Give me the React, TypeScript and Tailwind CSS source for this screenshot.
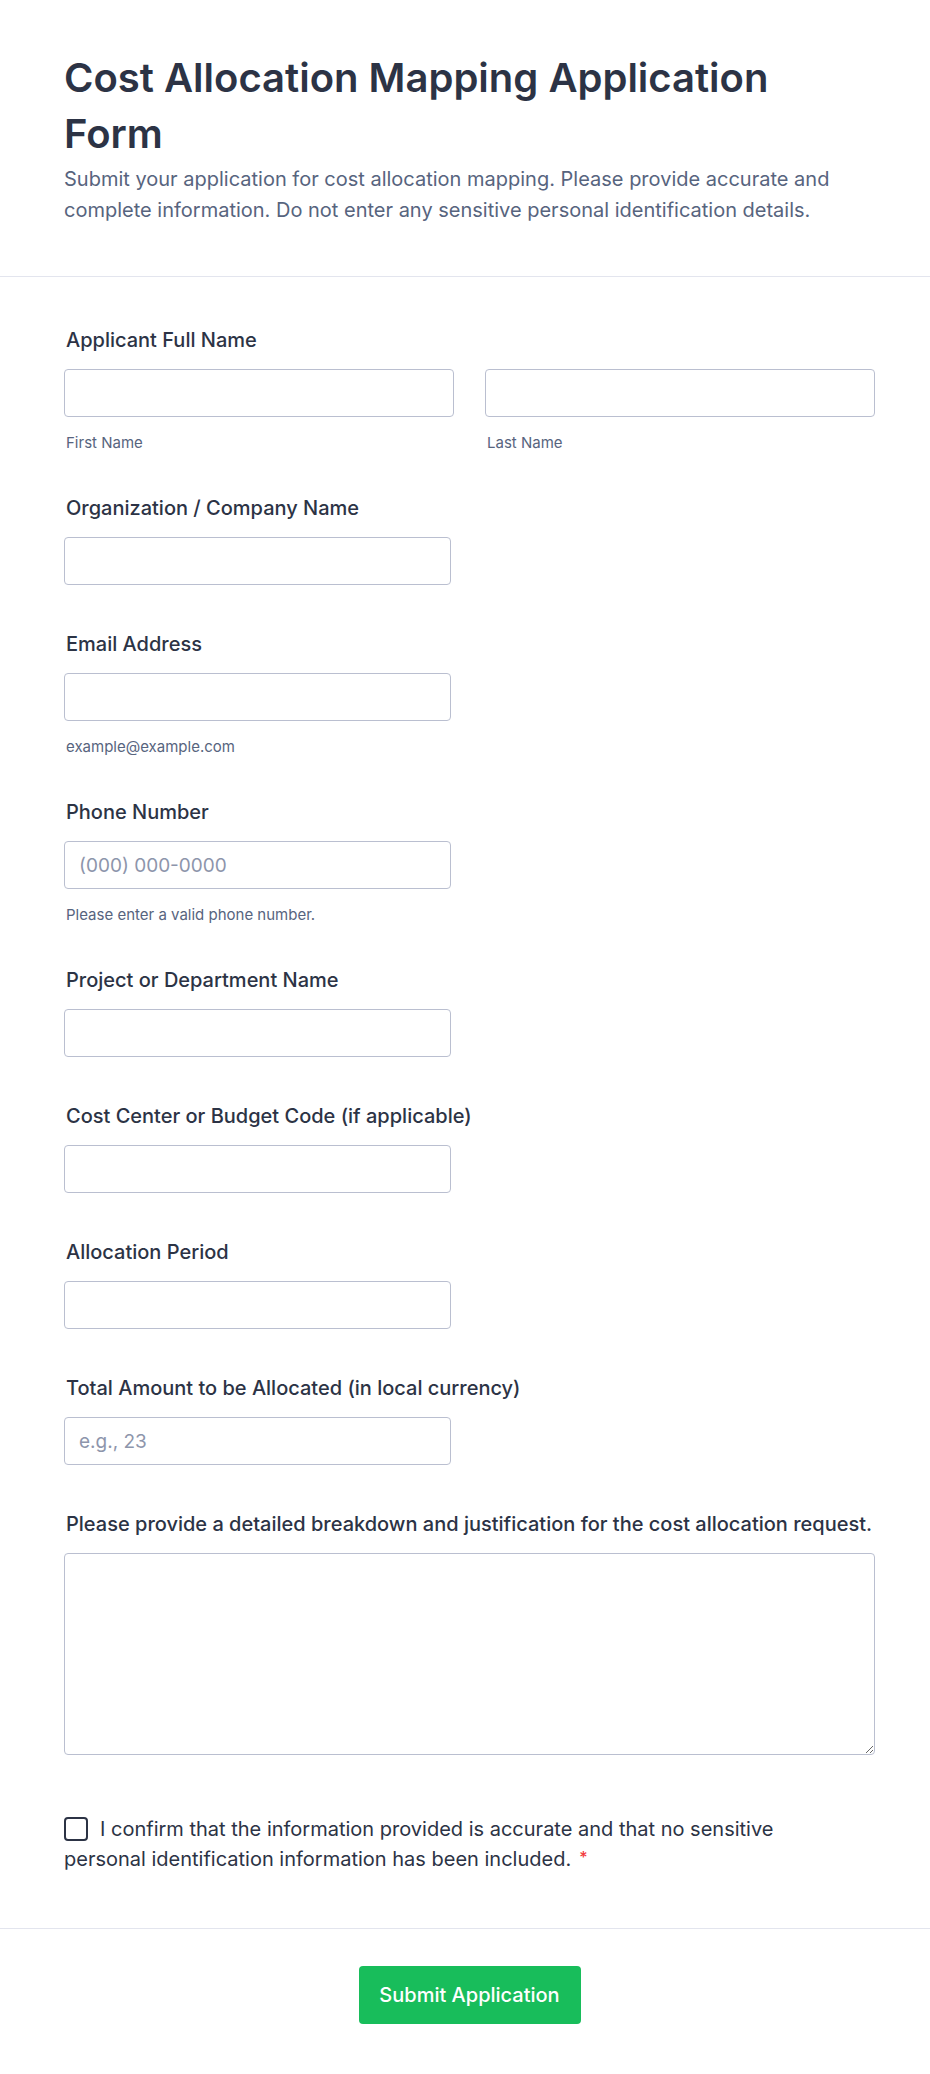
import React from 'react'

type Field = {
    label: string
    placeholder?: string
    sub?: string
}

const singleFields: Field[] = [
    { label: 'Organization / Company Name' },
    { label: 'Email Address', sub: 'example@example.com' },
    {
        label: 'Phone Number',
        placeholder: '(000) 000-0000',
        sub: 'Please enter a valid phone number.',
    },
    { label: 'Project or Department Name' },
    { label: 'Cost Center or Budget Code (if applicable)' },
    { label: 'Allocation Period' },
    { label: 'Total Amount to be Allocated (in local currency)', placeholder: 'e.g., 23' },
]

const inputClass =
    'block h-12 w-full rounded border border-[#babfd0] bg-white px-3.5 text-[19px] text-[#2c3345] placeholder:text-[#8d95ab] outline-none'

function Label({ children }: { children: React.ReactNode }) {
    return (
        <label className="mb-[15px] ml-0.5 block text-[20px] font-medium leading-[28px] text-[#2c3345]">
            {children}
        </label>
    )
}

function Sub({ children }: { children: React.ReactNode }) {
    return (
        <div className="ml-0.5 mt-4 -mb-1 text-[15px] leading-5 text-[#57647e]">
            {children}
        </div>
    )
}

export default function App() {
    return (
        <div className="min-h-screen bg-white font-['Inter',sans-serif] text-[#2c3345]">
            <div className="border-b border-[#e3e5ee] pl-16 pt-[50px] pb-[50px]">
                <div className="max-w-[800px]">
                    <h1 className="text-[40px] font-semibold leading-[56px] text-[#2c3345]">
                        Cost Allocation Mapping Application Form
                    </h1>
                    <p className="mt-0.5 text-[20px] leading-[31px] text-[#57647e]">
                        Submit your application for cost allocation mapping. Please
                        provide accurate and complete information. Do not enter any
                        sensitive personal identification details.
                    </p>
                </div>
            </div>

            <form className="pl-16 pr-[55px] pt-[49px]">
                <div className="pb-[45px]">
                    <Label>Applicant Full Name</Label>
                    <div className="grid grid-cols-2 gap-[31px]">
                        <div>
                            <input className={inputClass} />
                            <Sub>First Name</Sub>
                        </div>
                        <div>
                            <input className={inputClass} />
                            <Sub>Last Name</Sub>
                        </div>
                    </div>
                </div>

                {singleFields.map((f) => (
                    <div key={f.label} className="pb-[45px]">
                        <Label>{f.label}</Label>
                        <div className="w-[387px]">
                            <input className={inputClass} placeholder={f.placeholder} />
                            {f.sub && <Sub>{f.sub}</Sub>}
                        </div>
                    </div>
                ))}

                <div className="pb-[60px]">
                    <Label>
                        Please provide a detailed breakdown and justification for the
                        cost allocation request.
                    </Label>
                    <textarea className="block h-[202px] w-full rounded border border-[#babfd0] bg-white px-3.5 py-2 text-[19px] outline-none" />
                </div>

                <div className="max-w-[750px] pb-[55px] text-[20px] leading-[28px] text-[#2c3345]">
                    <label>
                        <input
                            type="checkbox"
                            className="mr-3 inline-block h-6 w-6 appearance-none rounded border-2 border-[#2c3345] bg-white align-[-5px]"
                        />
                        I confirm that the information provided is accurate and that no
                        sensitive personal identification information has been included.
                        <span className="ml-2 align-[3px] text-[16px] font-medium text-[#f23a3c]">
                            *
                        </span>
                    </label>
                </div>
            </form>

            <div className="flex justify-center border-t border-[#e3e5ee] pl-16 pr-[55px] pt-[37px] pb-[51px]">
                <button
                    type="button"
                    className="h-[58px] w-[222px] rounded bg-[#18bd5b] text-[20px] font-medium text-white"
                >
                    Submit Application
                </button>
            </div>
        </div>
    )
}
